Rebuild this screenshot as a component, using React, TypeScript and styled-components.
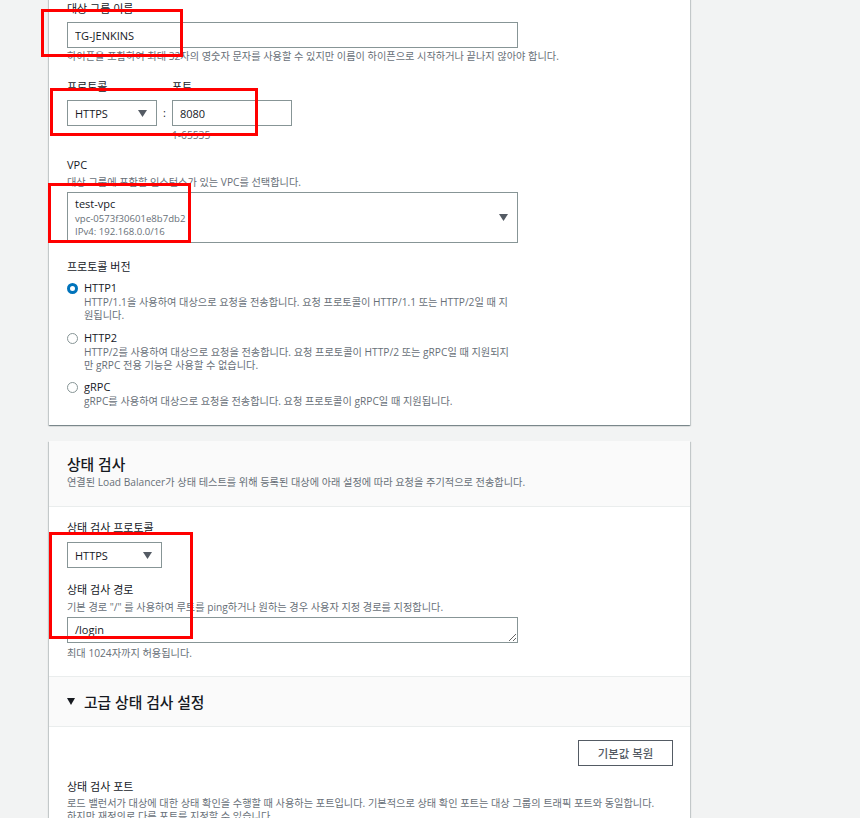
import React from "react";
import styled, { createGlobalStyle } from "styled-components";

const GlobalStyle = createGlobalStyle`
  html, body { margin: 0; padding: 0; background: #f2f3f3; overflow: hidden; }
  body { font-family: "Open Sans", "Noto Sans CJK KR", sans-serif; color: #16191f; }
  * { box-sizing: border-box; }
`;

const Root = styled.div`
  position: relative;
  width: 860px;
  height: 818px;
  overflow: hidden;
`;

const Page = styled.div`
  display: flex;
  flex-direction: column;
  gap: 16px;
  padding-left: 49px;
  width: 690px;
`;

const Card = styled.section<{ $first?: boolean }>`
  background: #fff;
  width: 641px;
  margin-top: ${(p) => (p.$first ? "-19px" : "0")};
  box-shadow: 0 1px 1px 0 rgba(0, 28, 36, 0.3), 1px 1px 1px 0 rgba(0, 28, 36, 0.15),
    -1px 1px 1px 0 rgba(0, 28, 36, 0.15);
`;

const CardBody = styled.div<{ $pad: string }>`
  display: flex;
  flex-direction: column;
  padding: ${(p) => p.$pad};
`;

const CardHeader = styled.header`
  background: #fafafa;
  border-bottom: 1px solid #eaeded;
  padding: 14px 18px 17px;
`;

const Title = styled.h2`
  margin: 0;
  font-size: 14.8px;
  line-height: 18px;
  font-weight: 500;
  color: #16191f;
`;

const Field = styled.div<{ $mt?: number }>`
  display: flex;
  flex-direction: column;
  margin-top: ${(p) => p.$mt ?? 0}px;
`;

const Label = styled.div<{ $mb?: number }>`
  font-size: 11px;
  line-height: 16px;
  color: #16191f;
  margin-bottom: ${(p) => p.$mb ?? 0}px;
  white-space: nowrap;
`;

const Hint = styled.div<{ $mt?: number; $lh?: number }>`
  font-size: 10.2px;
  line-height: ${(p) => p.$lh ?? 14}px;
  color: #687078;
  margin-top: ${(p) => p.$mt ?? 0}px;
  white-space: nowrap;
`;

const TextInput = styled.input<{ $w: number }>`
  width: ${(p) => p.$w}px;
  height: 26px;
  border: 1px solid #879596;
  border-radius: 0;
  padding: 0 7px;
  font-family: inherit;
  font-size: 11px;
  color: #16191f;
  background: #fff;
  outline: none;
`;

const TextArea = styled.textarea`
  width: 451px;
  height: 26px;
  border: 1px solid #879596;
  border-radius: 0;
  padding: 4px 7px 0;
  font-family: inherit;
  font-size: 11px;
  line-height: 16px;
  color: #16191f;
  background: #fff;
  resize: vertical;
  overflow: hidden;
  outline: none;
  display: block;
`;

const SelectBox = styled.div<{ $w: number; $h: number }>`
  width: ${(p) => p.$w}px;
  height: ${(p) => p.$h}px;
  border: 1px solid #879596;
  background: #fff;
  display: flex;
  align-items: center;
  justify-content: space-between;
  padding: 0 9px 0 7px;
  font-size: 11px;
  color: #16191f;
`;

const SelectStack = styled.div`
  display: flex;
  flex-direction: column;
  align-self: flex-start;
  padding-top: 4px;
`;

const OptionMain = styled.div`
  font-size: 11px;
  line-height: 14px;
  color: #16191f;
`;

const OptionSub = styled.div<{ $mt?: number }>`
  font-size: 9.6px;
  line-height: 13px;
  color: #687078;
  margin-top: ${(p) => p.$mt ?? 0}px;
`;

const Caret = () => (
  <svg width="9" height="7" viewBox="0 0 9 7">
    <path d="M0 0 H9 L4.5 7 Z" fill="#545b64" />
  </svg>
);

const Row = styled.div`
  display: flex;
  align-items: flex-start;
`;

const Column = styled.div`
  display: flex;
  flex-direction: column;
`;

const Colon = styled.div`
  width: 15px;
  margin-top: 21px;
  height: 26px;
  line-height: 26px;
  text-align: center;
  font-size: 11px;
  color: #16191f;
`;

const RadioGroup = styled.div`
  display: flex;
  flex-direction: column;
  margin-top: 6px;
`;

const RadioOption = styled.div<{ $mt?: number }>`
  display: flex;
  align-items: flex-start;
  gap: 5px;
  margin-top: ${(p) => p.$mt ?? 0}px;
`;

const RadioDot = styled.span<{ $checked?: boolean }>`
  width: 11px;
  height: 11px;
  margin-top: 2px;
  margin-right: 1px;
  border-radius: 50%;
  flex: none;
  background: #fff;
  border: ${(p) => (p.$checked ? "3.5px solid #0073bb" : "1px solid #879596")};
`;

const RadioText = styled.div`
  display: flex;
  flex-direction: column;
`;

const RadioTitle = styled.div`
  font-size: 11px;
  line-height: 14px;
  color: #16191f;
`;

const RadioDesc = styled.div`
  font-size: 10.2px;
  line-height: 13px;
  color: #687078;
  margin-top: 1px;
  white-space: nowrap;
`;

const ExpandHeader = styled.div`
  display: flex;
  align-items: center;
  gap: 9px;
  height: 51px;
  padding: 0 18px;
  background: #fafafa;
  border-top: 1px solid #eaeded;
  border-bottom: 1px solid #eaeded;
  font-size: 14.8px;
  font-weight: 500;
  color: #16191f;
`;

const ExpandBody = styled.div`
  display: flex;
  flex-direction: column;
  padding: 13px 17px 0 18px;
`;

const ButtonRow = styled.div`
  display: flex;
  justify-content: flex-end;
`;

const Button = styled.button`
  height: 26px;
  width: 95px;
  border: 1px solid #545b64;
  background: #fff;
  color: #545b64;
  font-family: inherit;
  font-size: 11.4px;
  font-weight: 500;
  padding: 0;
  border-radius: 0;
`;

const Annotation = styled.div<{ $x: number; $y: number; $w: number; $h: number }>`
  position: absolute;
  left: ${(p) => p.$x}px;
  top: ${(p) => p.$y}px;
  width: ${(p) => p.$w}px;
  height: ${(p) => p.$h}px;
  border: 3px solid #ff0000;
  pointer-events: none;
`;

export default function App() {
  return (
    <Root>
      <GlobalStyle />
      <Page>
        <Card $first>
          <CardBody $pad="20px 18px 17px">
            <Field>
              <Label $mb={5}>대상 그룹 이름</Label>
              <TextInput $w={451} readOnly value="TG-JENKINS" />
              <Hint $mt={1}>
                하이픈을 포함하여 최대 32자의 영숫자 문자를 사용할 수 있지만 이름이 하이픈으로 시작하거나 끝나지 않아야 합니다.
              </Hint>
            </Field>

            <Field $mt={16}>
              <Row>
                <Column>
                  <Label $mb={5}>프로토콜</Label>
                  <SelectBox $w={90} $h={26}>
                    <span>HTTPS</span>
                    <Caret />
                  </SelectBox>
                </Column>
                <Colon>:</Colon>
                <Column>
                  <Label $mb={5}>포트</Label>
                  <TextInput $w={120} readOnly value="8080" />
                  <Hint $mt={2}>1-65535</Hint>
                </Column>
              </Row>
            </Field>

            <Field $mt={15}>
              <Label>VPC</Label>
              <Hint $mt={2}>대상 그룹에 포함할 인스턴스가 있는 VPC를 선택합니다.</Hint>
              <div style={{ height: 3 }} />
              <SelectBox $w={451} $h={51}>
                <SelectStack>
                  <OptionMain>test-vpc</OptionMain>
                  <OptionSub $mt={1}>vpc-0573f30601e8b7db2</OptionSub>
                  <OptionSub>IPv4: 192.168.0.0/16</OptionSub>
                </SelectStack>
                <Caret />
              </SelectBox>
            </Field>

            <Field $mt={16}>
              <Label>프로토콜 버전</Label>
              <RadioGroup>
                <RadioOption>
                  <RadioDot $checked />
                  <RadioText>
                    <RadioTitle>HTTP1</RadioTitle>
                    <RadioDesc>
                      HTTP/1.1을 사용하여 대상으로 요청을 전송합니다. 요청 프로토콜이 HTTP/1.1 또는 HTTP/2일 때 지
                      <br />
                      원됩니다.
                    </RadioDesc>
                  </RadioText>
                </RadioOption>
                <RadioOption $mt={9}>
                  <RadioDot />
                  <RadioText>
                    <RadioTitle>HTTP2</RadioTitle>
                    <RadioDesc>
                      HTTP/2를 사용하여 대상으로 요청을 전송합니다. 요청 프로토콜이 HTTP/2 또는 gRPC일 때 지원되지
                      <br />
                      만 gRPC 전용 기능은 사용할 수 없습니다.
                    </RadioDesc>
                  </RadioText>
                </RadioOption>
                <RadioOption $mt={8}>
                  <RadioDot />
                  <RadioText>
                    <RadioTitle>gRPC</RadioTitle>
                    <RadioDesc>gRPC를 사용하여 대상으로 요청을 전송합니다. 요청 프로토콜이 gRPC일 때 지원됩니다.</RadioDesc>
                  </RadioText>
                </RadioOption>
              </RadioGroup>
            </Field>
          </CardBody>
        </Card>

        <Card>
          <CardHeader>
            <Title>상태 검사</Title>
            <Hint $mt={2}>
              연결된 Load Balancer가 상태 테스트를 위해 등록된 대상에 아래 설정에 따라 요청을 주기적으로 전송합니다.
            </Hint>
          </CardHeader>
          <CardBody $pad="13px 18px 16px">
            <Field>
              <Label $mb={6}>상태 검사 프로토콜</Label>
              <SelectBox $w={95} $h={26}>
                <span>HTTPS</span>
                <Caret />
              </SelectBox>
            </Field>
            <Field $mt={14}>
              <Label>상태 검사 경로</Label>
              <Hint $mt={2}>
                기본 경로 "/" 를 사용하여 루트를 ping하거나 원하는 경우 사용자 지정 경로를 지정합니다.
              </Hint>
              <div style={{ height: 3 }} />
              <TextArea readOnly value="/login" />
              <Hint $mt={3}>최대 1024자까지 허용됩니다.</Hint>
            </Field>
          </CardBody>
          <ExpandHeader>
            <svg width="8" height="7" viewBox="0 0 8 7">
              <path d="M0 0 H8 L4 7 Z" fill="#16191f" />
            </svg>
            <span>고급 상태 검사 설정</span>
          </ExpandHeader>
          <ExpandBody>
            <ButtonRow>
              <Button>기본값 복원</Button>
            </ButtonRow>
            <Field $mt={13}>
              <Label>상태 검사 포트</Label>
              <Hint $mt={2} $lh={13}>
                로드 밸런서가 대상에 대한 상태 확인을 수행할 때 사용하는 포트입니다. 기본적으로 상태 확인 포트는 대상 그룹의 트래픽 포트와 동일합니다.
                <br />
                하지만 재정의로 다른 포트를 지정할 수 있습니다.
              </Hint>
            </Field>
          </ExpandBody>
        </Card>
      </Page>

      <Annotation $x={41} $y={9} $w={142} $h={48} />
      <Annotation $x={50} $y={88} $w={208} $h={48} />
      <Annotation $x={48} $y={183} $w={143} $h={60} />
      <Annotation $x={49} $y={532} $w={144} $h={107} />
    </Root>
  );
}
